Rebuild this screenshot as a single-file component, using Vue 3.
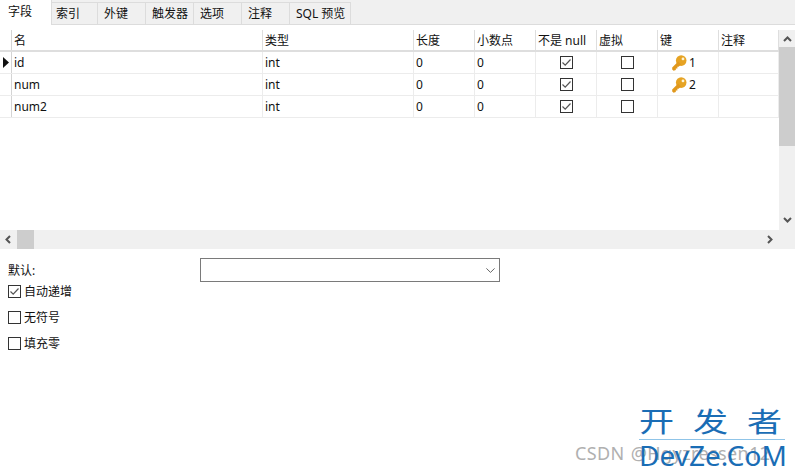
<script setup>
const tabs = [
  { label: '字段', w: 52 },
  { label: '索引', w: 46 },
  { label: '外键', w: 48 },
  { label: '触发器', w: 48 },
  { label: '选项', w: 48 },
  { label: '注释', w: 48 },
  { label: 'SQL 预览', w: 61 },
]
const heads = ['名', '类型', '长度', '小数点', '不是 null', '虚拟', '键', '注释']
const rows = [
  { name: 'id', key: 1, current: true, virtual: true },
  { name: 'num', key: 2, virtual: true },
  { name: 'num2', key: 0, virtual: true },
]
</script>

<template>
  <div class="page">
    <div class="tabs">
      <div v-for="(t, i) in tabs" :key="t.label" class="tab" :class="{ active: i === 0 }" :style="{ width: t.w + 'px' }">{{ t.label }}</div>
    </div>

    <div class="grid-area">
      <div class="table-wrap">
        <div class="row head">
          <div class="ind"></div>
          <div v-for="h in heads" :key="h" class="cell">{{ h }}</div>
        </div>
        <div v-for="r in rows" :key="r.name" class="row">
          <div class="ind">
            <svg v-if="r.current" width="6" height="11" viewBox="0 0 6 11"><path d="M0 0 L6 5.5 L0 11 Z" fill="#111" /></svg>
          </div>
          <div class="cell">{{ r.name }}</div>
          <div class="cell">int</div>
          <div class="cell">0</div>
          <div class="cell">0</div>
          <div class="cell center">
            <svg class="cb" width="13" height="13" viewBox="0 0 13 13"><rect x="0.5" y="0.5" width="12" height="12" fill="#fff" stroke="#333" /><path d="M2.5 6.5 L5.2 9.2 L10.5 3.5" fill="none" stroke="#555" stroke-width="1.2" /></svg>
          </div>
          <div class="cell center">
            <svg class="cb" width="13" height="13" viewBox="0 0 13 13"><rect x="0.5" y="0.5" width="12" height="12" fill="#fff" stroke="#333" /></svg>
          </div>
          <div class="cell keycell">
            <template v-if="r.key">
              <svg width="15" height="16" viewBox="0 0 15 16"><circle cx="9.2" cy="5.6" r="5.3" fill="#e6a323" /><path d="M6.2 6.6 L9 9.4 L6.6 11.8 L5.4 11.8 L5.4 13.4 L3.8 13.4 L3.8 15 L1.6 15.8 L0.2 14.4 L0.2 12.4 Z" fill="#e0981c" /><circle cx="11" cy="3.9" r="1.4" fill="#fdf3d6" /></svg>
              <span class="keynum">{{ r.key }}</span>
            </template>
          </div>
          <div class="cell"></div>
        </div>
      </div>
      <div class="vbar">
        <svg class="arrow up" width="9" height="6" viewBox="0 0 9 6"><path d="M1 5 L4.5 1.5 L8 5" fill="none" stroke="#555" stroke-width="2" /></svg>
        <div class="vthumb"></div>
        <div class="vspace"></div>
        <svg class="arrow down" width="9" height="6" viewBox="0 0 9 6"><path d="M1 1 L4.5 4.5 L8 1" fill="none" stroke="#555" stroke-width="2" /></svg>
      </div>
    </div>

    <div class="hbar">
      <svg class="harrow" width="6" height="9" viewBox="0 0 6 9"><path d="M5 1 L1.5 4.5 L5 8" fill="none" stroke="#555" stroke-width="2" /></svg>
      <div class="hthumb"></div>
      <div class="hspace"></div>
      <svg class="harrow" width="6" height="9" viewBox="0 0 6 9"><path d="M1 1 L4.5 4.5 L1 8" fill="none" stroke="#555" stroke-width="2" /></svg>
    </div>

    <div class="form">
      <div class="default-row">
        <span class="default-label">默认:</span>
        <div class="combo">
          <svg width="9" height="5" viewBox="0 0 9 5"><path d="M0.4 0.4 L4.5 4.4 L8.6 0.4" fill="none" stroke="#666" stroke-width="1" /></svg>
        </div>
      </div>
      <label class="check first">
        <svg width="13" height="13" viewBox="0 0 13 13"><rect x="0.5" y="0.5" width="12" height="12" fill="#fff" stroke="#333" /><path d="M2.5 6.5 L5.2 9.2 L10.5 3.5" fill="none" stroke="#555" stroke-width="1.2" /></svg>
        <span>自动递增</span>
      </label>
      <label class="check">
        <svg width="13" height="13" viewBox="0 0 13 13"><rect x="0.5" y="0.5" width="12" height="12" fill="#fff" stroke="#333" /></svg>
        <span>无符号</span>
      </label>
      <label class="check">
        <svg width="13" height="13" viewBox="0 0 13 13"><rect x="0.5" y="0.5" width="12" height="12" fill="#fff" stroke="#333" /></svg>
        <span>填充零</span>
      </label>
    </div>

    <div class="csdn">CSDN @Hgyzressen12</div>
    <div class="brand">
      <div class="brand-top"><span>开</span><span>发</span><span>者</span></div>
      <div class="brand-bottom">DevZe.CoM</div>
    </div>
  </div>
</template>

<style scoped>
.page {
  position: relative;
  width: 795px;
  height: 474px;
  overflow: hidden;
  background: #fff;
  color: #111;
  font: 12px/16px "Noto Sans", "Noto Sans CJK SC", sans-serif;
}
.tabs {
  display: flex;
  align-items: flex-end;
  height: 25px;
  background: #f0f0f0;
  border-bottom: 1px solid #dcdcdc;
  box-sizing: border-box;
  padding-top: 2px;
}
.tab {
  box-sizing: border-box;
  height: 22px;
  padding: 3px 0 0 6px;
  border-top: 1px solid #dcdcdc;
  border-right: 1px solid #dcdcdc;
  line-height: 16px;
  white-space: nowrap;
}
.tab:nth-child(2) {
  padding-left: 4px;
}
.tab.active {
  height: 25px;
  margin-top: -2px;
  margin-bottom: -1px;
  padding: 4px 0 0 8px;
  background: #fff;
  border-top: 0;
  position: relative;
}
.grid-area {
  display: flex;
  height: 205px;
}
.table-wrap {
  width: 779px;
  padding-top: 5px;
}
.row {
  display: grid;
  grid-template-columns: 12px 251px 151px 61px 61px 61px 61px 61px 60px;
  height: 22px;
  box-sizing: border-box;
  border-bottom: 1px solid #ececec;
}
.row.head {
  height: 22px;
  border-bottom: 2px solid #dedede;
}
.ind {
  border-right: 1px solid #d4d4d4;
  display: flex;
  align-items: center;
  justify-content: flex-start;
  padding-left: 3px;
  box-sizing: border-box;
}
.cell {
  box-sizing: border-box;
  border-right: 1px solid #ececec;
  padding-left: 2px;
  line-height: 21px;
  white-space: nowrap;
  overflow: hidden;
}
.head .cell {
  border-right: 1px solid #dedede;
  line-height: 22px;
}
.center {
  display: flex;
  align-items: center;
  justify-content: center;
  padding: 0 0 1px 0;
}
.keycell {
  display: flex;
  align-items: center;
  padding-left: 14px;
}
.keynum {
  margin-left: 2px;
  line-height: 16px;
}
.vbar {
  width: 16px;
  background: #f0f0f0;
  display: flex;
  flex-direction: column;
  align-items: center;
  margin-top: 5px;
}
.arrow {
  flex: none;
}
.arrow.up {
  margin: 6px 0 5px;
}
.arrow.down {
  margin: 6px 0 7px;
}
.vthumb {
  align-self: stretch;
  height: 99px;
  background: #cdcdcd;
}
.vspace,
.hspace {
  flex: 1;
}
.hbar {
  display: flex;
  align-items: center;
  height: 19px;
  background: #f0f0f0;
}
.harrow {
  flex: none;
  margin: 0 6px 0 5px;
}
.hthumb {
  width: 17px;
  height: 19px;
  background: #cdcdcd;
}
.hbar .harrow:last-child {
  margin-right: 22px;
}
.form {
  padding: 9px 0 0 8px;
}
.default-row {
  display: flex;
  align-items: center;
  height: 24px;
}
.default-label {
  width: 192px;
  padding-top: 1px;
}
.combo {
  box-sizing: border-box;
  width: 300px;
  height: 24px;
  border: 1px solid #7a7a7a;
  background: #fff;
  display: flex;
  align-items: center;
  justify-content: flex-end;
  padding-right: 4px;
}
.check {
  display: flex;
  align-items: center;
  box-sizing: border-box;
  height: 26px;
  padding-bottom: 1px;
  gap: 3px;
}
.check span {
  padding-top: 1px;
}
.check.first {
  margin-top: -3px;
}
.csdn {
  position: absolute;
  left: 575px;
  top: 441px;
  font-size: 18px;
  line-height: 24px;
  letter-spacing: 0.4px;
  word-spacing: 1px;
  color: #b0b0b0;
  white-space: nowrap;
}
.brand {
  position: absolute;
  left: 639px;
  top: 405px;
  width: 146px;
  color: #1a6db5;
}
.brand-top {
  display: flex;
  gap: 27px;
  font-size: 27px;
  line-height: 34px;
  height: 34px;
  border-bottom: 1px solid #8fc4e8;
}
.brand-top span {
  width: 27px;
  transform: scaleX(1.3);
  transform-origin: left center;
}
.brand-bottom {
  font-family: "Noto Sans", sans-serif;
  font-size: 28px;
  line-height: 30px;
  white-space: nowrap;
}
</style>
